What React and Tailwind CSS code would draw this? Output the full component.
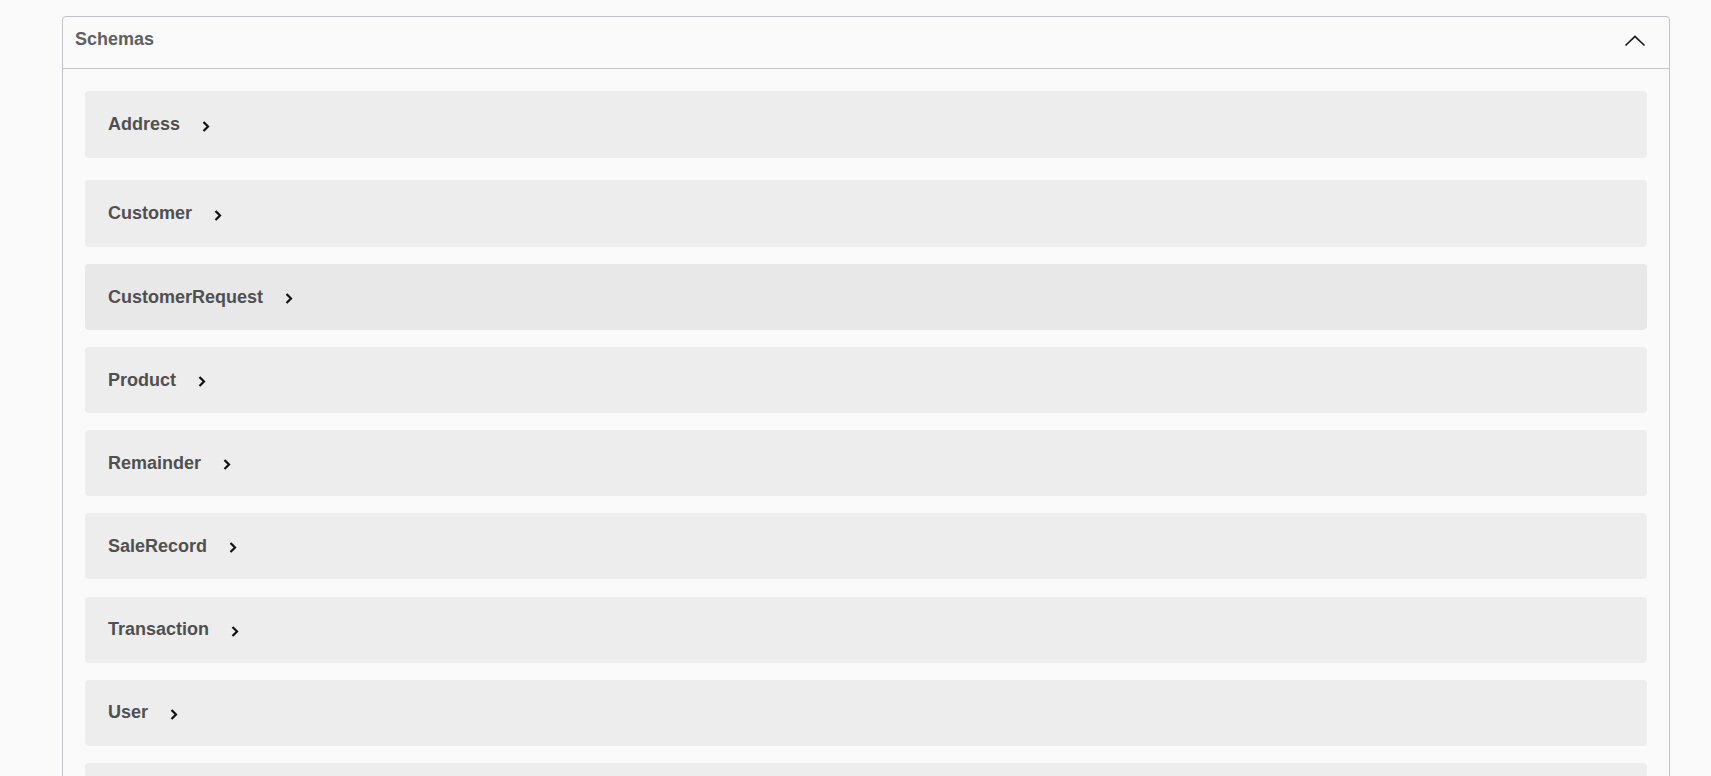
import React from 'react';

const schemas = [
  'Address',
  'Customer',
  'CustomerRequest',
  'Product',
  'Remainder',
  'SaleRecord',
  'Transaction',
  'User',
  'Warehouse',
];

function ChevronRight() {
  return (
    <svg width="10" height="11" viewBox="0 0 10 11" className="ml-[21px] mt-[3px] shrink-0">
      <polyline points="2.5,1 7,5.5 2.5,10" fill="none" stroke="#111" strokeWidth="2.2" />
    </svg>
  );
}

function ChevronUp() {
  return (
    <svg width="22" height="12" viewBox="0 0 22 12">
      <polyline points="1.5,10.5 11,1.5 20.5,10.5" fill="none" stroke="#1a1a1a" strokeWidth="1.7" />
    </svg>
  );
}

export default function App() {
  return (
    <div className="min-h-screen bg-[#fafafa] pl-[62px] pr-[41px] pt-[16px] font-['Liberation_Sans',Arial,sans-serif]">
      <section className="border border-[#c1c3c7] rounded-[4px] overflow-hidden">
        {/* header */}
        <div className="flex items-center justify-between h-[52px] pb-[6px] pl-[12px] pr-[23px] border-b border-[#c1c3c7]">
          <h4 className="text-[18px] font-bold text-[#606060]">Schemas</h4>
          <div className="mt-[2px]">
            <ChevronUp />
          </div>
        </div>

        {/* models */}
        <div className="px-[22px] pt-[22px]">
          {schemas.map((name, i) => (
            <div
              key={name}
              className={
                i === 0
                  ? 'flex items-center h-[67px] mb-[22px] pl-[23px] rounded-[4px] bg-[#ededed]'
                  : i === 1
                  ? 'flex items-center h-[67px] mb-[17px] pl-[23px] rounded-[4px] bg-[#ededed]'
                  : i === 2
                  ? 'flex items-center h-[66px] mb-[17px] pl-[23px] rounded-[4px] bg-[#e8e8e8]'
                  : 'flex items-center h-[66px] mb-[17.2px] pl-[23px] rounded-[4px] bg-[#ededed]'
              }
            >
              <span className="text-[18px] font-bold text-[#505050]">{name}</span>
              <ChevronRight />
            </div>
          ))}
        </div>
      </section>
    </div>
  );
}
